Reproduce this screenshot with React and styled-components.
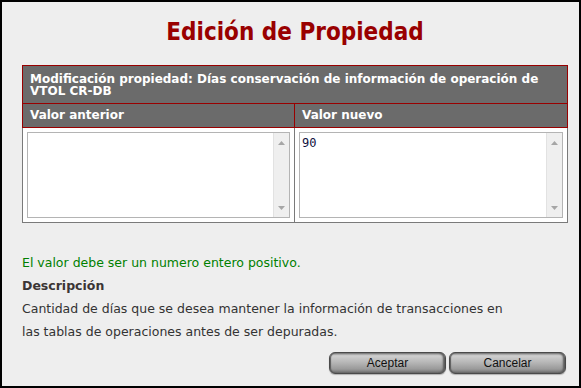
import React from 'react'
import styled, { createGlobalStyle } from 'styled-components';

const Global = createGlobalStyle`
  html, body {
    margin: 0;
    padding: 0;
    background: #eeeeee;
  }
  * { box-sizing: border-box; }
`;

const Frame = styled.div`
  width: 581px;
  height: 388px;
  border: 2px solid #000;
  background: #eeeeee;
  padding: 0 11px 0 20px;
  display: flex;
  flex-direction: column;
  font-family: "DejaVu Sans", Verdana, sans-serif;
  color: #333;
`;

const Title = styled.h1`
  margin: 16px 0 0;
  height: 47px;
  font-family: "DejaVu Sans Condensed", "DejaVu Sans", sans-serif;
  font-size: 24px;
  line-height: 28px;
  font-weight: bold;
  text-align: center;
  color: #990000;
`;

const Grid = styled.div`
  display: grid;
  grid-template-columns: 273px 273px;
`;

const Caption = styled.div`
  grid-column: 1 / 3;
  background: #6b6b6b;
  border: 1px solid #990000;
  color: #fff;
  font-weight: bold;
  font-size: 12px;
  line-height: 12px;
  padding: 7px 7px 6px;
  height: 39px;
`;

const HeadCell = styled.div`
  background: #6b6b6b;
  border: 1px solid #990000;
  border-top: none;
  border-left: ${p => (p.$first ? '1px solid #990000' : 'none')};
  color: #fff;
  font-weight: bold;
  font-size: 12px;
  line-height: 23px;
  padding: 0 7px;
  height: 24px;
`;

const BodyCell = styled.div`
  border: 1px solid #7a7a7a;
  border-top: none;
  border-left: ${p => (p.$first ? '1px solid #7a7a7a' : 'none')};
  background: #fff;
  padding: 4px;
`;

const Field = styled.div`
  display: flex;
  height: 86px;
  border: 1px solid #b4b4b4;
  background: #fff;
`;

const Area = styled.textarea`
  flex: 1;
  border: none;
  outline: none;
  resize: none;
  overflow: hidden;
  padding: 3px 2px;
  font-family: "DejaVu Sans Mono", monospace;
  font-size: 12px;
  color: #101040;
  background: #fff;
`;

const Track = styled.div`
  width: 16px;
  background: #efefef;
  border-left: 1px solid #e2e2e2;
  display: flex;
  flex-direction: column;
  justify-content: space-between;
  align-items: center;
  padding: 8px 0 7px;
`;

const Arrow = ({ down }) => (
  <svg width="7" height="4" viewBox="0 0 7 4">
    <path d={down ? 'M0 0 H7 L3.5 4 Z' : 'M0 4 H7 L3.5 0 Z'} fill="#a6a6a6" />
  </svg>
);

const Notes = styled.div`
  margin-top: 28px;
  font-size: 12.5px;
  line-height: 23px;
`;

const Hint = styled.div`
  color: #008000;
`;

const Label = styled.div`
  font-weight: bold;
  color: #3b3535;
`;

const Text = styled.div`
  max-width: 492px;
`;

const Buttons = styled.div`
  margin-top: 9px;
  display: flex;
  justify-content: flex-end;
  gap: 3px;
  padding-right: 2px;
`;

const Button = styled.button`
  width: 117px;
  height: 22px;
  border-radius: 6px;
  border: 1px solid #4a4a4a;
  background: linear-gradient(to bottom, #8a8a8a 0%, #cfcfcf 14%, #b8b8b8 45%, #9a9a9a 80%, #707070 100%);
  box-shadow: inset 1px 0 1px #5a5a5a, inset -2px 0 2px #5a5a5a, 0 1px 1px #b0b0b0;
  font-family: "Liberation Sans", Arial, sans-serif;
  font-size: 12px;
  color: #111;
  padding: 0;
  cursor: pointer;
`;

const TextField = ({ value }) => (
  <Field>
    <Area defaultValue={value} />
    <Track>
      <Arrow />
      <Arrow down />
    </Track>
  </Field>
);

const App = () => {
  return (
    <Frame>
      <Global />
      <Title>Edición de Propiedad</Title>
      <Grid>
        <Caption>Modificación propiedad: Días conservación de información de operación de VTOL CR-DB</Caption>
        <HeadCell $first>Valor anterior</HeadCell>
        <HeadCell>Valor nuevo</HeadCell>
        <BodyCell $first>
          <TextField value="" />
        </BodyCell>
        <BodyCell>
          <TextField value="90" />
        </BodyCell>
      </Grid>
      <Notes>
        <Hint>El valor debe ser un numero entero positivo.</Hint>
        <Label>Descripción</Label>
        <Text>Cantidad de días que se desea mantener la información de transacciones en las tablas de operaciones antes de ser depuradas.</Text>
      </Notes>
      <Buttons>
        <Button>Aceptar</Button>
        <Button>Cancelar</Button>
      </Buttons>
    </Frame>
  );
}

export default App;
